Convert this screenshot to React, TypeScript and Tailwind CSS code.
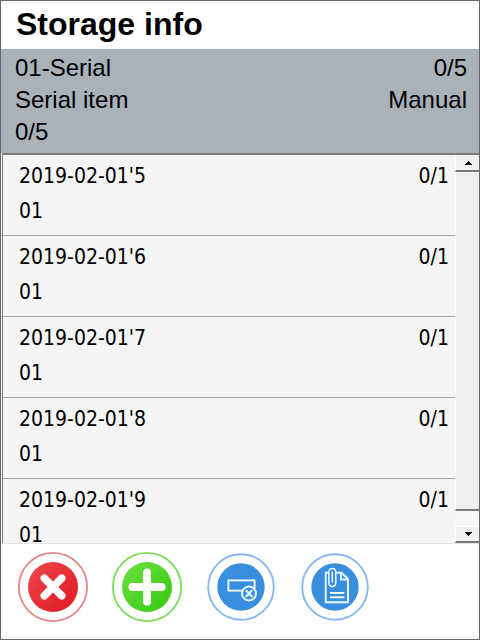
import type { ReactNode } from 'react';

const items = [
  { name: "2019-02-01'5", code: '01', count: '0/1' },
  { name: "2019-02-01'6", code: '01', count: '0/1' },
  { name: "2019-02-01'7", code: '01', count: '0/1' },
  { name: "2019-02-01'8", code: '01', count: '0/1' },
  { name: "2019-02-01'9", code: '01', count: '0/1' },
];

function ScrollButton({ label, points, className }: { label: string; points: string; className: string }) {
  return (
    <button
      aria-label={label}
      className={`flex shrink-0 items-center justify-center border-l border-l-white bg-[#f0f0f0] ${className}`}
    >
      <svg width="8" height="4" viewBox="0 0 8 4" shapeRendering="crispEdges">
        <polygon points={points} fill="#000" />
      </svg>
    </button>
  );
}

function ScrollBar() {
  return (
    <div className="flex w-6 shrink-0 flex-col bg-[#f0f0f0]">
      <ScrollButton label="Scroll up" points="0,4 4,0 8,4" className="h-[17px] border-b-2 border-b-[#7a7a7a]" />
      <div className="flex-1 border-t border-l border-b-2 border-t-white border-l-white border-b-[#7a7a7a] bg-[#eeeeee]" />
      <div className="h-[15px] shrink-0 bg-[repeating-conic-gradient(#f0f0f0_0_25%,#ffffff_0_50%)] bg-[length:2px_2px]" />
      <ScrollButton label="Scroll down" points="0,0 8,0 4,4" className="h-[17px] border-t border-b-2 border-t-white border-b-[#7a7a7a]" />
    </div>
  );
}

function RoundButton({ label, children }: { label: string; children: ReactNode }) {
  return (
    <button aria-label={label} className="size-[70px] shrink-0 rounded-full">
      <svg viewBox="0 0 70 70" className="size-full" fill="none">
        {children}
      </svg>
    </button>
  );
}

export default function App() {
  return (
    <div className="flex h-screen flex-col border border-[#666666] bg-white font-['Liberation_Sans',Arial,sans-serif] text-black">
      <h1 className="h-12 shrink-0 px-[15px] pt-1 text-[32px] leading-[38px] font-bold">Storage info</h1>

      <div className="shrink-0 bg-[#a9b2b9] pt-[3px] pr-3 pb-[5px] pl-3.5 text-2xl leading-8">
        <div className="flex justify-between">
          <span>01-Serial</span>
          <span>0/5</span>
        </div>
        <div className="flex justify-between">
          <span>Serial item</span>
          <span>Manual</span>
        </div>
        <div>0/5</div>
      </div>

      <div className="ml-px flex min-h-0 flex-1 border-t-2 border-l border-[#7a7a7a] bg-[#f5f5f5]">
        <ul className="flex-1 overflow-hidden font-['DejaVu_Sans_Condensed','DejaVu_Sans',sans-serif] text-[21px] leading-[35px]">
          {items.map((item) => (
            <li key={item.name} className="h-[81px] border-b border-[#a5a5a5] pt-1 pr-1.5 pl-4">
              <div className="flex justify-between">
                <span>{item.name}</span>
                <span>{item.count}</span>
              </div>
              <div>{item.code}</div>
            </li>
          ))}
        </ul>
        <ScrollBar />
      </div>

      <div className="flex h-24 shrink-0 gap-6 border-t border-[#e3e3e3] pt-2 pl-[17px]">
        <RoundButton label="Cancel">
          <defs>
            <linearGradient id="red" x1="0" y1="0" x2="1" y2="1">
              <stop offset="0" stopColor="#ee474b" />
              <stop offset="1" stopColor="#de1820" />
            </linearGradient>
          </defs>
          <circle cx="35" cy="35" r="34.1" stroke="#e58589" strokeWidth="1.8" />
          <circle cx="35" cy="35" r="25" fill="url(#red)" />
          <path d="M26.3 26.3L43.7 43.7M43.7 26.3L26.3 43.7" stroke="#fff" strokeWidth="7.6" strokeLinecap="round" />
        </RoundButton>
        <RoundButton label="Add">
          <defs>
            <linearGradient id="green" x1="0" y1="0" x2="1" y2="1">
              <stop offset="0" stopColor="#6be044" />
              <stop offset="1" stopColor="#35c90c" />
            </linearGradient>
          </defs>
          <circle cx="35" cy="35" r="34.1" stroke="#7bdd57" strokeWidth="1.8" />
          <circle cx="35" cy="35" r="25" fill="url(#green)" />
          <path d="M35 20.3V49.7M20.3 35H49.7" stroke="#fff" strokeWidth="7.8" strokeLinecap="round" />
        </RoundButton>
        <RoundButton label="Clear field">
          <circle cx="35" cy="35" r="32.8" stroke="#86b9ed" strokeWidth="1.9" />
          <circle cx="35" cy="35" r="23.7" fill="#3a8ee0" />
          <rect x="22.4" y="28.4" width="26.2" height="10.2" stroke="#eafaff" strokeWidth="1.9" />
          <circle cx="43" cy="41.5" r="7" fill="#3a8ee0" stroke="#eafaff" strokeWidth="1.9" />
          <path d="M40.3 38.8L45.7 44.2M45.7 38.8L40.3 44.2" stroke="#eafaff" strokeWidth="2.2" strokeLinecap="round" />
        </RoundButton>
        <RoundButton label="Documents">
          <circle cx="35" cy="35" r="32.8" stroke="#86b9ed" strokeWidth="1.9" />
          <circle cx="35" cy="35" r="23.7" fill="#3a8ee0" />
          <path d="M29 20.7H25.7V50.3H48V27L41.5 20.7H35.5M41 21V27.5H47.5" stroke="#eafaff" strokeWidth="1.9" />
          <path
            d="M35.8 20V31A3.5 3.5 0 0 1 28.8 31V20A3.5 3.5 0 0 1 35.8 20M32.3 20V30"
            stroke="#eafaff"
            strokeWidth="1.5"
            strokeLinecap="round"
          />
          <path d="M30 41H44.3M30 45.3H44.3" stroke="#eafaff" strokeWidth="1.9" />
        </RoundButton>
      </div>
    </div>
  );
}
